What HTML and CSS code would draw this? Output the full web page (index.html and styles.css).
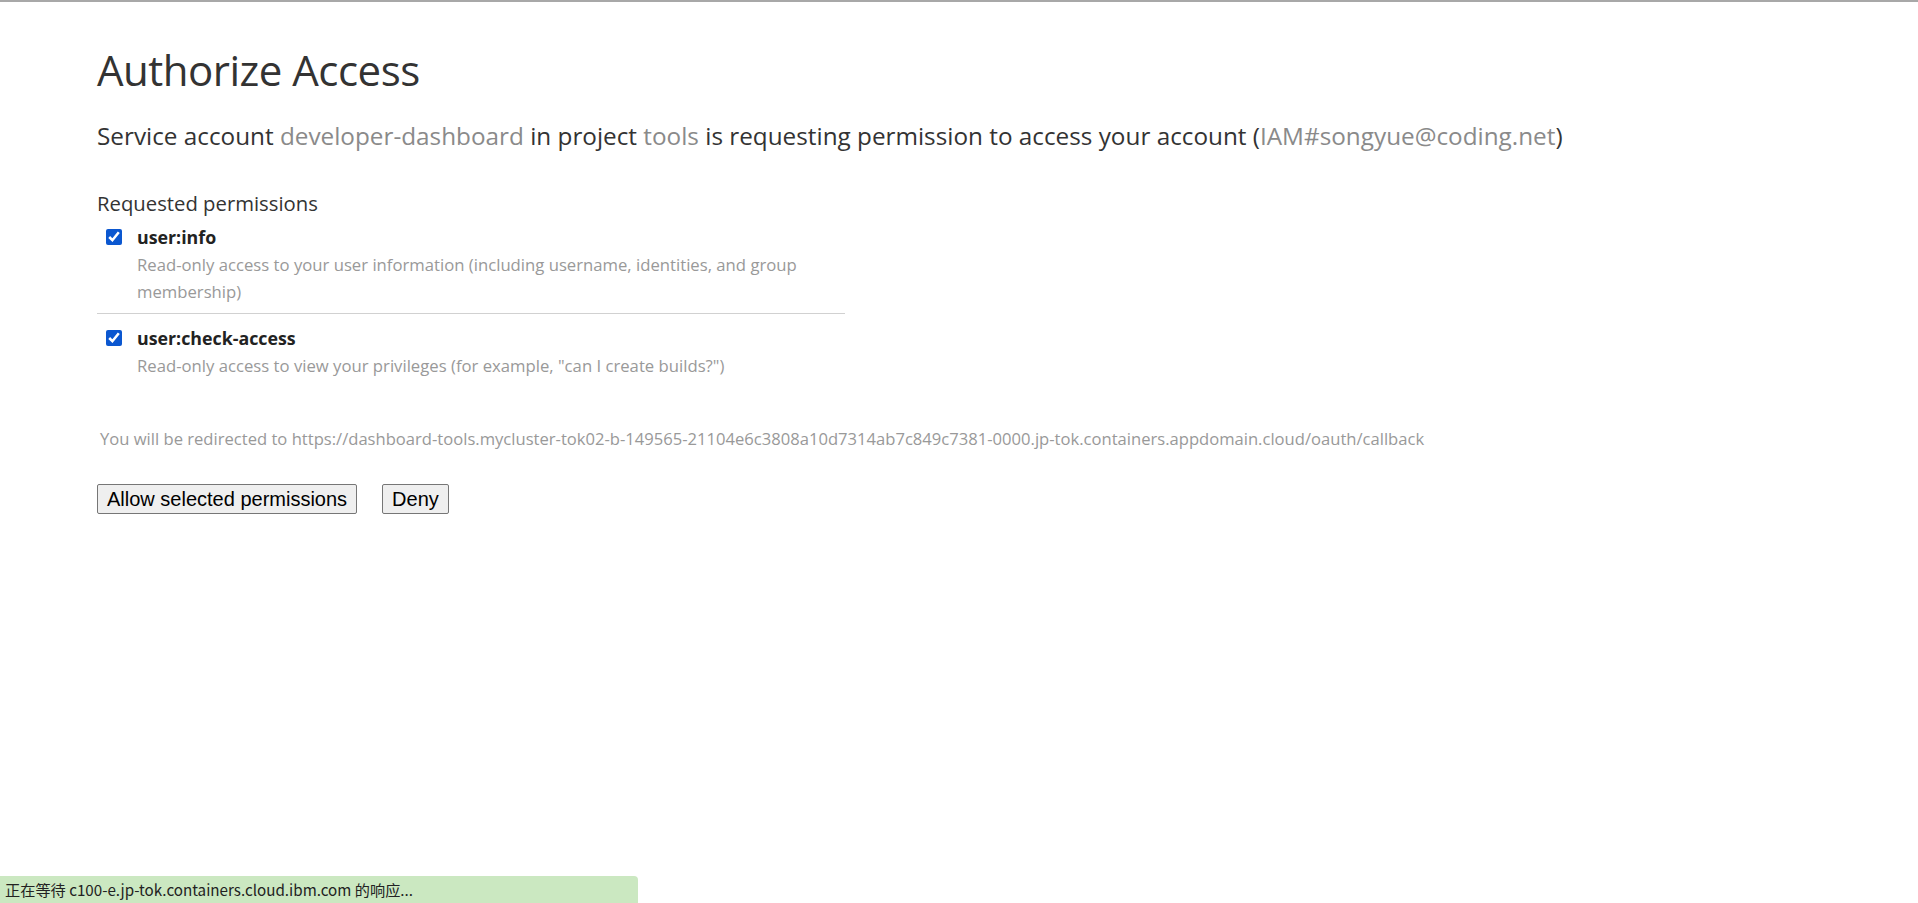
FILE: index.html
```html
<!DOCTYPE html>
<html lang="en">
<head>
<meta charset="utf-8">
<title>Authorize Access</title>
<link rel="stylesheet" href="styles.css">
</head>
<body>
<div class="topline"></div>
<main class="page">
  <h1 class="title">Authorize Access</h1>
  <p class="lead">Service account <span class="muted">developer-dashboard</span> in project <span class="muted">tools</span> is requesting permission to access your account (<span class="muted">IAM#songyue@coding.net</span>)</p>

  <form class="perm-form">
    <h3 class="perm-heading">Requested permissions</h3>
    <div class="perm-list">
      <label class="perm">
        <input type="checkbox" class="perm-check" checked>
        <span class="perm-body">
          <span class="perm-name">user:info</span>
          <span class="perm-desc">Read-only access to your user information (including username, identities, and group membership)</span>
        </span>
      </label>
      <label class="perm">
        <input type="checkbox" class="perm-check" checked>
        <span class="perm-body">
          <span class="perm-name">user:check-access</span>
          <span class="perm-desc">Read-only access to view your privileges (for example, "can I create builds?")</span>
        </span>
      </label>
    </div>
    <p class="redirect">You will be redirected to https://dashboard-tools.mycluster-tok02-b-149565-21104e6c3808a10d7314ab7c849c7381-0000.jp-tok.containers.appdomain.cloud/oauth/callback</p>
    <div class="actions">
      <button type="button" class="btn">Allow selected permissions</button>
      <button type="button" class="btn">Deny</button>
    </div>
  </form>
</main>
<div class="status">正在等待 c100-e.jp-tok.containers.cloud.ibm.com 的响应...</div>
</body>
</html>
```
FILE: styles.css
```css
html, body {
  margin: 0;
  padding: 0;
  background: #fff;
}
body {
  font-family: "Open Sans", "Noto Sans", sans-serif;
  color: #333;
  height: 903px;
  overflow: hidden;
  position: relative;
}
.topline {
  height: 2px;
  background: #a8a8a8;
}
.page {
  padding-left: 97px;
}
.title {
  margin: 0;
  padding-top: 42px;
  font-size: 42px;
  font-weight: 400;
  line-height: 52px;
  color: #333;
  letter-spacing: -0.5px;
}
.lead {
  margin: 25px 0 0;
  font-size: 24.3px;
  line-height: 30px;
  color: #333;
}
.muted {
  color: #8a8a8a;
}
.perm-heading {
  margin: 39px 0 0;
  font-size: 20.3px;
  font-weight: 400;
  line-height: 26px;
  color: #333;
}
.perm-list {
  width: 748px;
}
.perm {
  display: flex;
  gap: 15px;
  padding: 8px 0 8px 9px;
  border-bottom: 1px solid #d1d1d1;
}
.perm + .perm {
  padding-top: 11px;
}
.perm:last-child {
  border-bottom: none;
}
.perm-check {
  margin: 5px 0 0;
  width: 16px;
  height: 16px;
  accent-color: #0b57d0;
  flex: none;
}
.perm-body {
  display: flex;
  flex-direction: column;
}
.perm-name {
  font-weight: 700;
  font-size: 17.8px;
  line-height: 27px;
  color: #222;
}
.perm-desc {
  font-size: 16.7px;
  line-height: 27px;
  color: #999;
}
.redirect {
  margin: 41px 0 0 3px;
  font-size: 16.6px;
  line-height: 22px;
  color: #999;
}
.actions {
  display: flex;
  gap: 25px;
  margin-top: 34px;
}
.btn {
  font-family: "Liberation Sans", Arial, sans-serif;
  font-size: 20px;
  line-height: 22px;
  padding: 3px 9px;
  background: #efefef;
  border: 1px solid #767676;
  border-radius: 2px;
  color: #000;
}
.status {
  position: absolute;
  left: 0;
  bottom: 0;
  width: 633px;
  height: 27px;
  padding-left: 5px;
  background: #cbe8c1;
  border-top-right-radius: 4px;
  font-family: "Noto Sans CJK SC", "Open Sans", sans-serif;
  font-size: 15.2px;
  line-height: 27px;
  color: #222;
}
```
